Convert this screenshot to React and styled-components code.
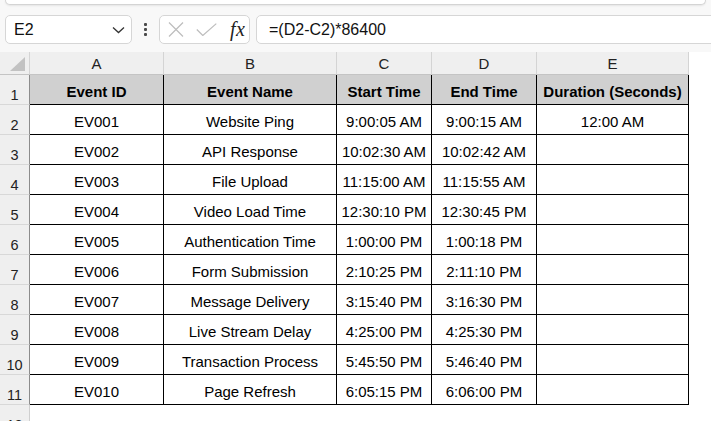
import React from 'react';
import styled, { createGlobalStyle } from 'styled-components';

const GlobalStyle = createGlobalStyle`
  html, body {
    margin: 0;
    padding: 0;
    background: #f8f8f8;
    overflow: hidden;
  }
  body {
    font-family: "Liberation Sans", Arial, sans-serif;
    color: #000;
  }
`;

const rows = [
  ['EV001', 'Website Ping', '9:00:05 AM', '9:00:15 AM', '12:00 AM'],
  ['EV002', 'API Response', '10:02:30 AM', '10:02:42 AM', ''],
  ['EV003', 'File Upload', '11:15:00 AM', '11:15:55 AM', ''],
  ['EV004', 'Video Load Time', '12:30:10 PM', '12:30:45 PM', ''],
  ['EV005', 'Authentication Time', '1:00:00 PM', '1:00:18 PM', ''],
  ['EV006', 'Form Submission', '2:10:25 PM', '2:11:10 PM', ''],
  ['EV007', 'Message Delivery', '3:15:40 PM', '3:16:30 PM', ''],
  ['EV008', 'Live Stream Delay', '4:25:00 PM', '4:25:30 PM', ''],
  ['EV009', 'Transaction Process', '5:45:50 PM', '5:46:40 PM', ''],
  ['EV010', 'Page Refresh', '6:05:15 PM', '6:06:00 PM', ''],
];

const headers = ['Event ID', 'Event Name', 'Start Time', 'End Time', 'Duration (Seconds)'];
const letters = ['A', 'B', 'C', 'D', 'E'];

const Page = styled.div`
  width: 711px;
  height: 421px;
  overflow: hidden;
`;

const RibbonEdge = styled.div`
  height: 4px;
  margin: 0 5px;
  background: #fff;
  border: 1px solid #d4d4d4;
  border-top: none;
  border-radius: 0 0 7px 7px;
  box-shadow: 0 1px 2px rgba(0, 0, 0, 0.08);
`;

const FormulaBar = styled.div`
  display: flex;
  align-items: center;
  height: 29px;
  margin-top: 10px;
  padding-left: 5px;
  overflow: hidden;
`;

const Box = styled.div`
  box-sizing: border-box;
  height: 29px;
  background: #fff;
  border: 1px solid #d6d6d6;
  border-radius: 5px;
  display: flex;
  align-items: center;
`;

const NameBox = styled(Box)`
  width: 127px;
  padding: 0 6px 0 8px;
  justify-content: space-between;
  font-size: 16px;
  color: #111;
`;

const Dots = styled.div`
  width: 27px;
  display: flex;
  flex-direction: column;
  align-items: center;
  gap: 2px;
  span {
    width: 3px;
    height: 3px;
    border-radius: 1px;
    background: #4a4a4a;
  }
`;

const FxBox = styled(Box)`
  width: 91px;
  padding-left: 8px;
  gap: 12px;
`;

const Fx = styled.span`
  font-family: "Liberation Serif", "Times New Roman", serif;
  font-style: italic;
  font-size: 20px;
  color: #222;
  margin-left: 1px;
  letter-spacing: 0.5px;
`;

const FormulaInput = styled(Box)`
  flex: 1;
  margin-left: 6px;
  margin-right: -12px;
  padding-left: 12px;
  font-size: 16px;
  color: #111;
`;

const Sheet = styled.div`
  margin-top: 8px;
  display: grid;
  grid-template-columns: 30px 134px 173px 95px 105px 152px 1fr;
  grid-template-rows: 23px repeat(12, 30px);
  background: #fff;
`;

const Corner = styled.div`
  box-sizing: border-box;
  position: relative;
  background: #efefef;
  border-right: 1px solid #d4d4d4;
  border-bottom: 1px solid #c4c4c4;
`;

const CornerTriangle = styled.div`
  position: absolute;
  right: 4px;
  bottom: 3px;
  width: 0;
  height: 0;
  border-left: 15px solid transparent;
  border-bottom: 14px solid #c2c2c2;
`;

const ColHead = styled.div`
  box-sizing: border-box;
  display: flex;
  align-items: center;
  justify-content: center;
  font-size: 15px;
  color: #222;
  background: ${(p) => (p.$blank ? '#fff' : '#efefef')};
  border-right: ${(p) => (p.$blank ? 'none' : '1px solid #d4d4d4')};
  border-bottom: ${(p) => (p.$blank ? 'none' : '1px solid #c4c4c4')};
`;

const RowHead = styled.div`
  box-sizing: border-box;
  display: flex;
  align-items: flex-end;
  justify-content: center;
  font-size: 14.5px;
  line-height: 17px;
  padding-bottom: 0;
  color: #222;
  background: #efefef;
  border-right: 1px solid ${(p) => (p.$inTable ? '#8c8c8c' : '#cfcfcf')};
  border-bottom: 1px solid #d8d8d8;
`;

const Cell = styled.div`
  box-sizing: border-box;
  display: flex;
  align-items: flex-end;
  justify-content: center;
  padding-bottom: 4px;
  font-size: 15px;
  line-height: 17px;
  white-space: nowrap;
  font-weight: ${(p) => (p.$head ? 700 : 400)};
  background: ${(p) => (p.$head ? '#d0d0d0' : '#fff')};
  border-right: 1px solid #000;
  border-bottom: 1px solid #000;
`;

const Blank = styled.div`
  background: #fff;
`;

function Chevron() {
  return (
    <svg width="13" height="8" viewBox="0 0 13 8" fill="none">
      <path d="M1 1.5l5.5 5 5.5-5" stroke="#333" strokeWidth="1.3" />
    </svg>
  );
}

function Cross() {
  return (
    <svg width="16" height="15" viewBox="0 0 16 15" fill="none">
      <path d="M1 0.5l14 14M15 0.5l-14 14" stroke="#bdbdbd" strokeWidth="1.2" />
    </svg>
  );
}

function Check() {
  return (
    <svg width="21" height="13" viewBox="0 0 21 13" fill="none">
      <path d="M0.8 6.5l6 6L20.3 0.6" stroke="#bdbdbd" strokeWidth="1.2" />
    </svg>
  );
}

export default function App() {
  return (
    <Page>
      <GlobalStyle />
      <RibbonEdge />
      <FormulaBar>
        <NameBox>
          <span>E2</span>
          <Chevron />
        </NameBox>
        <Dots>
          <span />
          <span />
          <span />
        </Dots>
        <FxBox>
          <Cross />
          <Check />
          <Fx>fx</Fx>
        </FxBox>
        <FormulaInput>=(D2-C2)*86400</FormulaInput>
      </FormulaBar>
      <Sheet>
        <Corner>
          <CornerTriangle />
        </Corner>
        {letters.map((l) => (
          <ColHead key={l}>{l}</ColHead>
        ))}
        <ColHead $blank />

        <RowHead $inTable>1</RowHead>
        {headers.map((h) => (
          <Cell key={h} $head>{h}</Cell>
        ))}
        <Blank />

        {rows.map((r, i) => (
          <React.Fragment key={r[0]}>
            <RowHead $inTable>{i + 2}</RowHead>
            {r.map((v, j) => (
              <Cell key={j}>{v}</Cell>
            ))}
            <Blank />
          </React.Fragment>
        ))}

        <RowHead>12</RowHead>
      </Sheet>
    </Page>
  );
}
